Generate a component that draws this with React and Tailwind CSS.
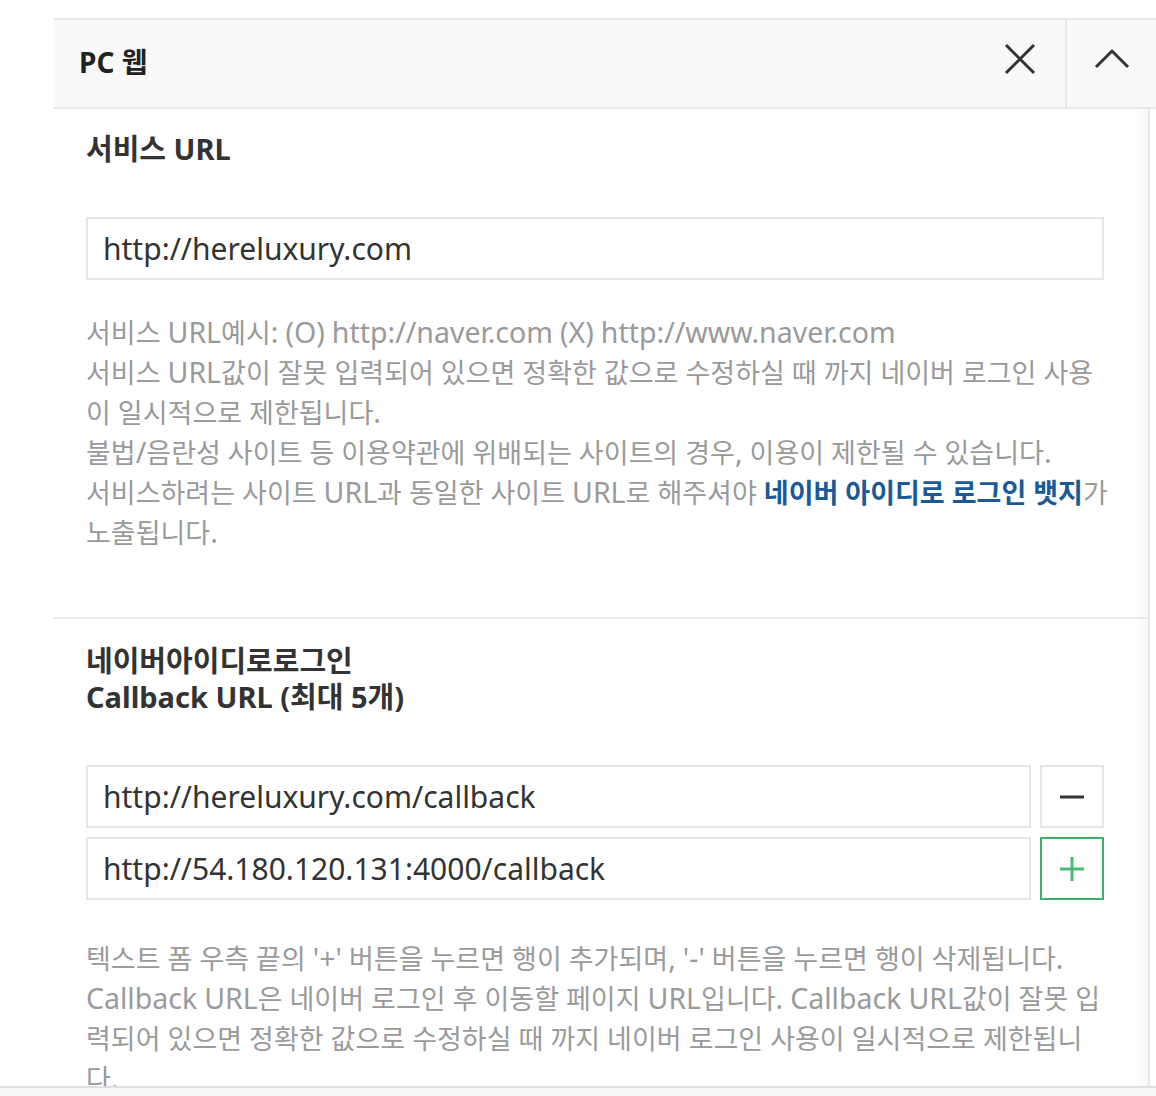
import React from 'react';

const font = { fontFamily: '"Noto Sans", "Noto Sans CJK KR", sans-serif' };

// latin runs render a touch larger than hangul in the original page
const mix = (text) =>
  text.split(/([!-~]+)/).map((part, i) =>
    /^[!-~]+$/.test(part) ? (
      <span key={i} className="text-[28.5px] leading-none">{part}</span>
    ) : (
      part
    )
  );

const Helper = ({ children }) => (
  <div className="text-[27px] leading-[40px] text-[#9a9a9a]">{children}</div>
);

const UrlInput = ({ value, className = '' }) => (
  <div className={`h-[63px] border-2 border-[#e6e6e6] bg-white flex items-center pl-[15px] text-[30px] text-[#333] ${className}`}>
    {value}
  </div>
);

export default function App() {
  return (
    <div style={font} className="h-[1096px] w-[1156px] flex flex-col bg-white overflow-hidden">
      <div className="flex-1 overflow-hidden pl-[54px] pt-[18px] flex flex-col">
        {/* header */}
        <div className="h-[91px] shrink-0 flex bg-[#f9f9f9] border-t-2 border-b-2 border-[#e8e8e8]">
          <div className="flex-1 flex items-center pl-[25px] pb-[4px] text-[28px] font-bold text-[#222]">PC 웹</div>
          <button className="w-[90px] flex items-center justify-center pb-[10px]">
            <svg width="34" height="34" viewBox="0 0 34 34" fill="none" stroke="#333" strokeWidth="3">
              <path d="M3 3 L31 31 M31 3 L3 31" />
            </svg>
          </button>
          <button className="w-[91px] flex items-center justify-center border-l-2 border-[#e8e8e8] pb-[10px]">
            <svg width="36" height="22" viewBox="0 0 36 22" fill="none" stroke="#333" strokeWidth="3">
              <path d="M2 19 L18 3 L34 19" />
            </svg>
          </button>
        </div>

        {/* body */}
        <div className="flex-1 mr-[6px] border-r-2 border-[#e8e8e8] shadow-[inset_-14px_0_14px_-10px_rgba(0,0,0,0.05)]">
          <section className="pl-[32px] pr-[44px] pt-[22px] pb-[64px] border-b-2 border-[#ebebeb]">
            <h2 className="text-[29px] leading-[36px] font-bold text-[#333]">서비스 URL</h2>
            <UrlInput value="http://hereluxury.com" className="mt-[50px]" />
            <div className="mt-[33px] -mr-[4px]">
              <Helper>{mix('서비스 URL예시: (O) http://naver.com (X) http://www.naver.com')}</Helper>
              <Helper>{mix('서비스 URL값이 잘못 입력되어 있으면 정확한 값으로 수정하실 때 까지 네이버 로그인 사용이 일시적으로 제한됩니다.')}</Helper>
              <Helper>{mix('불법/음란성 사이트 등 이용약관에 위배되는 사이트의 경우, 이용이 제한될 수 있습니다.')}</Helper>
              <Helper>
                {mix('서비스하려는 사이트 URL과 동일한 사이트 URL로 해주셔야 ')}
                <span className="font-bold text-[#1a5a98]">네이버 아이디로 로그인 뱃지</span>
                {mix('가 노출됩니다.')}
              </Helper>
            </div>
          </section>

          <section className="pl-[32px] pr-[44px] pt-[24px]">
            <h2 className="text-[29px] leading-[36px] font-bold text-[#333]">
              네이버아이디로로그인
              <br />
              Callback URL (최대 5개)
            </h2>
            <div className="mt-[50px] flex flex-col gap-[9px]">
              <div className="flex gap-[9px]">
                <UrlInput value="http://hereluxury.com/callback" className="flex-1" />
                <button className="w-[64px] h-[63px] border-2 border-[#e6e6e6] bg-white flex items-center justify-center">
                  <svg width="24" height="4" viewBox="0 0 24 4"><rect x="0" y="0.5" width="24" height="3" fill="#333" /></svg>
                </button>
              </div>
              <div className="flex gap-[9px]">
                <UrlInput value="http://54.180.120.131:4000/callback" className="flex-1" />
                <button className="w-[64px] h-[63px] border-2 border-[#3fae67] bg-white flex items-center justify-center">
                  <svg width="24" height="24" viewBox="0 0 24 24" stroke="#4cb874" strokeWidth="3"><path d="M0 12 H24 M12 0 V24" /></svg>
                </button>
              </div>
            </div>
            <div className="mt-[39px]">
              <Helper>{mix("텍스트 폼 우측 끝의 '+' 버튼을 누르면 행이 추가되며, '-' 버튼을 누르면 행이 삭제됩니다.")}</Helper>
              <Helper>{mix('Callback URL은 네이버 로그인 후 이동할 페이지 URL입니다. Callback URL값이 잘못 입력되어 있으면 정확한 값으로 수정하실 때 까지 네이버 로그인 사용이 일시적으로 제한됩니다.')}</Helper>
            </div>
          </section>
        </div>
      </div>
      <div className="h-[10px] shrink-0 border-t-2 border-[#dedee3] bg-[#f7f7f9]" />
    </div>
  );
}
